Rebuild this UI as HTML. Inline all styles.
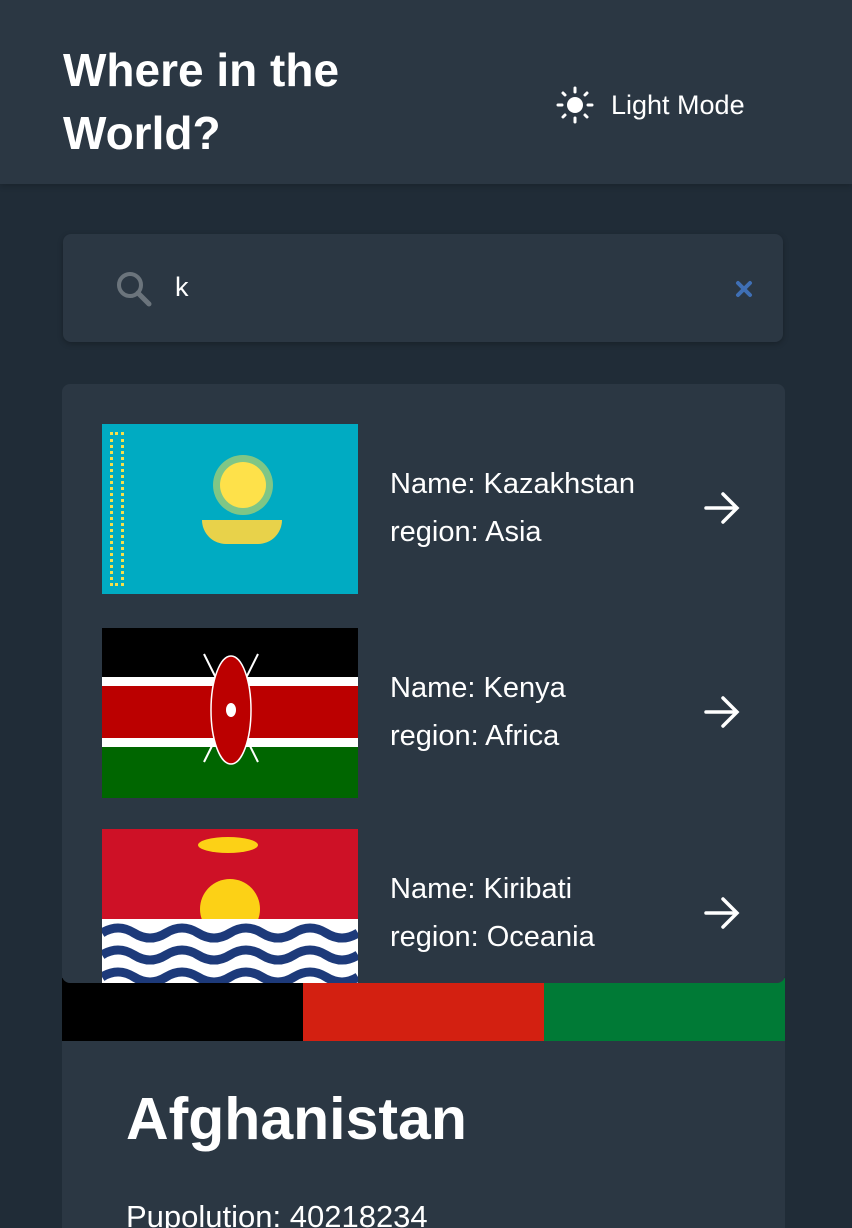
<!DOCTYPE html>
<html><head><style>
*{margin:0;padding:0;box-sizing:border-box}
html,body{width:852px;height:1228px;overflow:hidden}
body{background:#202c37;font-family:"Liberation Sans",sans-serif;color:#fff;position:relative}
.hdr{position:absolute;left:0;top:0;width:852px;height:184px;background:#2b3743;box-shadow:0 2px 6px rgba(0,0,0,.2)}
.title{position:absolute;left:63px;top:39px;font-size:46px;font-weight:bold;line-height:63px}
.mode{position:absolute;left:556px;top:86px;font-size:27px;display:flex;align-items:center;gap:17px}
.search{position:absolute;left:63px;top:234px;width:720px;height:108px;background:#2b3743;border-radius:8px;box-shadow:0 2px 6px rgba(0,0,0,.25)}
.panel{position:absolute;left:62px;top:384px;width:723px;height:599px;background:#2b3743;border-radius:8px;overflow:hidden;z-index:2}
.row{position:absolute;left:40px;width:640px;height:170px}
.flag{position:absolute;left:0;top:0;width:256px;height:170px;overflow:hidden}
.txt{position:absolute;left:288px;top:36px;font-size:29px;line-height:48px}
.arr{position:absolute;left:600px;top:64px}
.stripes{position:absolute;left:62px;top:978px;width:723px;height:63px;display:flex}
.stripes div{flex:1}
.card{position:absolute;left:62px;top:1041px;width:723px;height:200px;background:#2b3743}
.card h1{position:absolute;left:64px;top:44px;font-size:59px;font-weight:bold}
.card p{position:absolute;left:64px;top:158px;font-size:31px}
</style></head><body>
<div class="hdr">
<div class="title">Where in the<br>World?</div>
<div class="mode"><svg width="38" height="38" viewBox="0 0 38 38"><circle cx="19" cy="19" r="8" fill="#fff"/><g stroke="#fff" stroke-width="3" stroke-linecap="round"><line x1="19" y1="2" x2="19" y2="6"/><line x1="19" y1="32" x2="19" y2="36"/><line x1="2" y1="19" x2="6" y2="19"/><line x1="32" y1="19" x2="36" y2="19"/><line x1="7" y1="7" x2="9" y2="9"/><line x1="29" y1="29" x2="31" y2="31"/><line x1="7" y1="31" x2="9" y2="29"/><line x1="29" y1="9" x2="31" y2="7"/></g></svg><span>Light Mode</span></div>
</div>
<div class="search">
<svg style="position:absolute;left:52px;top:36px" width="40" height="40" viewBox="0 0 40 40"><circle cx="15" cy="15" r="11" fill="none" stroke="#6b747c" stroke-width="4"/><line x1="23" y1="23" x2="34" y2="34" stroke="#6b747c" stroke-width="5" stroke-linecap="round"/></svg>
<span style="position:absolute;left:112px;top:38px;font-size:27px">k</span>
<svg style="position:absolute;left:672px;top:46px" width="18" height="18" viewBox="0 0 18 18"><g stroke="#3f6fb5" stroke-width="4" stroke-linecap="round"><line x1="3" y1="3" x2="15" y2="15"/><line x1="15" y1="3" x2="3" y2="15"/></g></svg>
</div>
<div class="panel">
<div class="row" style="top:40px">
<div class="flag" style="background:#00abc2"><div style="position:absolute;left:8px;top:8px;width:14px;height:154px;border:3px dotted #f5e04a"></div><div style="position:absolute;left:118px;top:38px;width:46px;height:46px;border-radius:50%;background:#fee14a;box-shadow:0 0 0 7px rgba(254,225,74,.5)"></div><div style="position:absolute;left:100px;top:96px;width:80px;height:24px;border-radius:0 0 40px 40px;background:#e8d24a"></div></div>
<div class="txt">Name: Kazakhstan<br>region: Asia</div>
<svg class="arr" width="40" height="40" viewBox="0 0 40 40"><g stroke="#fff" stroke-width="3.5" fill="none" stroke-linecap="round"><line x1="4" y1="20" x2="34" y2="20"/><polyline points="21,6 35,20 21,34"/></g></svg>
</div>
<div class="row" style="top:244px">
<div class="flag" style="background:linear-gradient(#000 0 49px,#fff 49px 58px,#bb0000 58px 110px,#fff 110px 119px,#006600 119px)"><svg style="position:absolute;left:96px;top:22px" width="66" height="116" viewBox="0 0 66 116"><line x1="6" y1="112" x2="60" y2="4" stroke="#fff" stroke-width="2"/><line x1="60" y1="112" x2="6" y2="4" stroke="#fff" stroke-width="2"/><ellipse cx="33" cy="60" rx="20" ry="54" fill="#bb0000" stroke="#fff" stroke-width="1.5"/><ellipse cx="33" cy="60" rx="5" ry="7" fill="#fff"/></svg></div>
<div class="txt">Name: Kenya<br>region: Africa</div>
<svg class="arr" width="40" height="40" viewBox="0 0 40 40"><g stroke="#fff" stroke-width="3.5" fill="none" stroke-linecap="round"><line x1="4" y1="20" x2="34" y2="20"/><polyline points="21,6 35,20 21,34"/></g></svg>
</div>
<div class="row" style="top:445px">
<div class="flag" style="background:#ce1126"><div style="position:absolute;left:98px;top:50px;width:60px;height:60px;border-radius:50%;background:#fcd116"></div><div style="position:absolute;left:96px;top:8px;width:60px;height:16px;background:#fcd116;border-radius:50%"></div>
<svg style="position:absolute;left:0;top:82px" width="256" height="90" viewBox="0 0 256 90"><rect x="0" y="8" width="256" height="82" fill="#fff"/><g fill="none" stroke="#1d3a7a" stroke-width="9"><path d="M0 22 q16 -10 32 0 t32 0 t32 0 t32 0 t32 0 t32 0 t32 0 t32 0"/><path d="M0 44 q16 -10 32 0 t32 0 t32 0 t32 0 t32 0 t32 0 t32 0 t32 0"/><path d="M0 66 q16 -10 32 0 t32 0 t32 0 t32 0 t32 0 t32 0 t32 0 t32 0"/></g></svg></div>
<div class="txt">Name: Kiribati<br>region: Oceania</div>
<svg class="arr" width="40" height="40" viewBox="0 0 40 40"><g stroke="#fff" stroke-width="3.5" fill="none" stroke-linecap="round"><line x1="4" y1="20" x2="34" y2="20"/><polyline points="21,6 35,20 21,34"/></g></svg>
</div>
</div>
<div class="stripes"><div style="background:#000"></div><div style="background:#d32011"></div><div style="background:#007a36"></div></div>
<div class="card"><h1>Afghanistan</h1><p>Pupolution: 40218234</p></div>
</body></html>
